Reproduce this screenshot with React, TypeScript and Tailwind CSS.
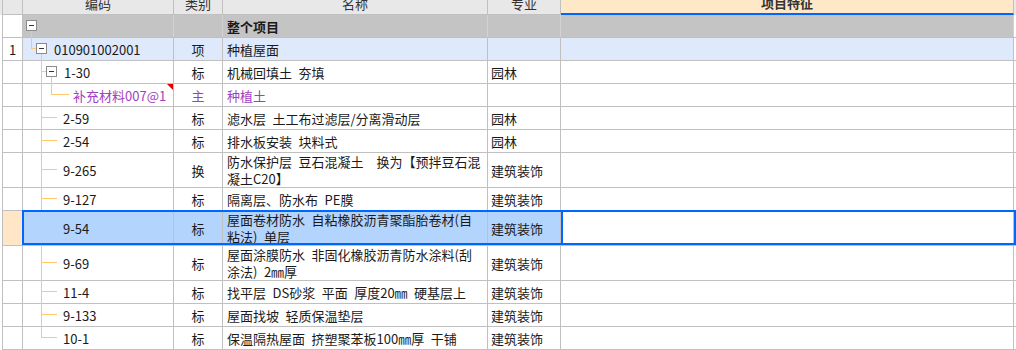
import React from "react";

type Tree = "top" | "group" | "sub" | "leaf" | "last";

interface RowData {
  no?: string;
  code: string;
  cat: string;
  name: string[];
  spec: string;
  tree: Tree;
  h?: string;
  purple?: boolean;
  flag?: boolean;
  selected?: boolean;
  tint?: boolean;
}

const S = "\u2002";

const rows: RowData[] = [
  { no: "1", code: "010901002001", cat: "项", name: ["种植屋面"], spec: "", tree: "top", tint: true },
  { code: "1-30", cat: "标", name: [`机械回填土${S}夯填`], spec: "园林", tree: "group" },
  { code: "补充材料007@1", cat: "主", name: ["种植土"], spec: "", tree: "sub", purple: true, flag: true },
  { code: "2-59", cat: "标", name: [`滤水层${S}土工布过滤层/分离滑动层`], spec: "园林", tree: "leaf" },
  { code: "2-54", cat: "标", name: [`排水板安装${S}块料式`], spec: "园林", tree: "leaf" },
  {
    code: "9-265",
    cat: "换",
    name: [`防水保护层${S}豆石混凝土${S}${S}换为【预拌豆石混`, "凝土C20】"],
    spec: "建筑装饰",
    tree: "leaf",
    h: "h-[35px]",
  },
  { code: "9-127", cat: "标", name: [`隔离层、防水布${S}PE膜`], spec: "建筑装饰", tree: "leaf" },
  {
    code: "9-54",
    cat: "标",
    name: [`屋面卷材防水${S}自粘橡胶沥青聚酯胎卷材(自`, `粘法)${S}单层`],
    spec: "建筑装饰",
    tree: "leaf",
    h: "h-[35px]",
    selected: true,
  },
  {
    code: "9-69",
    cat: "标",
    name: [`屋面涂膜防水${S}非固化橡胶沥青防水涂料(刮`, `涂法)${S}2㎜厚`],
    spec: "建筑装饰",
    tree: "leaf",
    h: "h-[35px]",
  },
  { code: "11-4", cat: "标", name: [`找平层${S}DS砂浆${S}平面${S}厚度20㎜${S}硬基层上`], spec: "建筑装饰", tree: "leaf" },
  { code: "9-133", cat: "标", name: [`屋面找坡${S}轻质保温垫层`], spec: "建筑装饰", tree: "leaf" },
  { code: "10-1", cat: "标", name: [`保温隔热屋面${S}挤塑聚苯板100㎜厚${S}干铺`], spec: "建筑装饰", tree: "last" },
];

const line = "absolute bg-[#ffc76e]";
const grid = "border-r border-[#c0c0c0]";

function Box({ left }: { left: string }) {
  return (
    <span
      className={`absolute top-[5px] ${left} w-[11px] h-[11px] border border-[#8c8c8c] bg-white flex items-center justify-center`}
    >
      <span className="w-[5px] h-px bg-[#333]" />
    </span>
  );
}

function TreeMarks({ tree }: { tree: Tree }) {
  const mid = "top-[calc(50%-1px)]";
  if (tree === "top")
    return (
      <>
        <span className={`${line} left-[8px] -top-px w-px h-[12px]`} />
        <span className={`${line} left-[8px] top-[10px] w-[5px] h-px`} />
        <Box left="left-[13px]" />
        <span className={`${line} left-[18px] top-[16px] -bottom-px w-px`} />
      </>
    );
  if (tree === "group")
    return (
      <>
        <span className={`${line} left-[18px] -top-px -bottom-px w-px`} />
        <span className={`${line} left-[18px] top-[10px] w-[5px] h-px`} />
        <Box left="left-[23px]" />
        <span className={`${line} left-[28px] top-[16px] -bottom-px w-px`} />
      </>
    );
  if (tree === "sub")
    return (
      <>
        <span className={`${line} left-[18px] -top-px -bottom-px w-px`} />
        <span className={`${line} left-[28px] -top-px w-px h-[12px]`} />
        <span className={`${line} left-[28px] top-[10px] w-[18px] h-px`} />
      </>
    );
  return (
    <>
      <span
        className={`${line} left-[18px] -top-px w-px ${tree === "last" ? "h-[calc(50%)]" : "-bottom-px"}`}
      />
      <span className={`${line} left-[18px] ${mid} w-[16px] h-px`} />
    </>
  );
}

const codePad: Record<Tree, string> = {
  top: "pl-[31px]",
  group: "pl-[41px]",
  sub: "pl-[50px]",
  leaf: "pl-[40px]",
  last: "pl-[40px]",
};

function Row({ r }: { r: RowData }) {
  const bg = r.selected ? "bg-[#b3d4fd]" : r.tint ? "bg-[#dee9fc]" : "bg-white";
  const color = r.purple ? "text-[#a33dc2]" : "text-[#1a1a1a]";
  return (
    <div className={`relative ml-[2px] flex ${r.h ?? "h-[23px]"} border-b border-[#c0c0c0] ${color}`}>
      <div
        className={`w-[21px] shrink-0 border-l ${grid} flex items-center justify-center ${
          r.selected ? "bg-[#ffe6c6]" : "bg-white"
        } text-[#1a1a1a]`}
      >
        {r.no}
      </div>
      <div className={`relative w-[151px] shrink-0 ${grid} ${bg} flex items-center ${codePad[r.tree]}`}>
        <TreeMarks tree={r.tree} />
        <span className="whitespace-nowrap">{r.code}</span>
        {r.flag && (
          <span className="absolute top-0 right-0 w-0 h-0 border-t-[6px] border-l-[6px] border-t-[#e00000] border-l-transparent" />
        )}
      </div>
      <div className={`w-[49px] shrink-0 ${grid} ${bg} flex items-center justify-center`}>{r.cat}</div>
      <div className={`w-[265px] shrink-0 ${grid} ${bg} flex flex-col justify-center pl-[4px]`}>
        {r.name.map((t) => (
          <span key={t} className="whitespace-nowrap">
            {t}
          </span>
        ))}
      </div>
      <div className={`w-[73px] shrink-0 ${grid} ${bg} flex items-center pl-[3px] text-[#1a1a1a]`}>{r.spec}</div>
      <div className={`w-[453px] shrink-0 ${grid} ${r.tint ? bg : "bg-white"}`} />
      {r.selected && (
        <>
          <div className="pointer-events-none absolute left-[20px] -top-px right-0 bottom-0 border-2 border-[#0066ff]" />
          <div className="pointer-events-none absolute left-[559px] -top-px right-0 bottom-0 border-2 border-[#0066ff]" />
        </>
      )}
    </div>
  );
}

export default function App() {
  const head = "shrink-0 border-r border-[#c0c0c0] flex items-center justify-center";
  return (
    <div className="w-[1016px] h-[350px] overflow-hidden bg-white font-['Noto_Sans_CJK_SC','Noto_Sans',sans-serif] text-[13px] leading-[17px]">
      <div className="-mt-[8px] flex h-[23px] bg-[#e8e8e8] pl-[2px] text-[#333]">
        <div className={`w-[21px] border-l border-b ${head}`} />
        <div className={`w-[151px] border-b ${head}`}>编码</div>
        <div className={`w-[49px] border-b ${head}`}>类别</div>
        <div className={`w-[265px] border-b ${head}`}>名称</div>
        <div className={`w-[73px] border-b ${head}`}>专业</div>
        <div className={`w-[453px] ${head} bg-[#ffe8c8] font-bold border-b-2 border-b-[#0066ff]`}>项目特征</div>
      </div>

      <div className="relative ml-[2px] flex h-[23px] border-b border-[#c0c0c0] text-[#1a1a1a]">
        <div className="w-[21px] shrink-0 border-l border-r border-[#c0c0c0] bg-white" />
        <div className="relative w-[151px] shrink-0 border-r border-[#d2d2d2] bg-[#c4c4c4]">
          <Box left="left-[3px]" />
          <span className={`${line} left-[8px] top-[16px] -bottom-px w-px`} />
        </div>
        <div className="w-[49px] shrink-0 border-r border-[#d2d2d2] bg-[#c4c4c4]" />
        <div className="w-[265px] shrink-0 border-r border-[#d2d2d2] bg-[#c4c4c4] flex items-center pl-[4px] font-bold">
          整个项目
        </div>
        <div className="w-[73px] shrink-0 border-r border-[#d2d2d2] bg-[#c4c4c4]" />
        <div className="w-[453px] shrink-0 border-r border-[#d2d2d2] bg-[#c4c4c4]" />
      </div>

      {rows.map((r) => (
        <Row key={r.code} r={r} />
      ))}
    </div>
  );
}
